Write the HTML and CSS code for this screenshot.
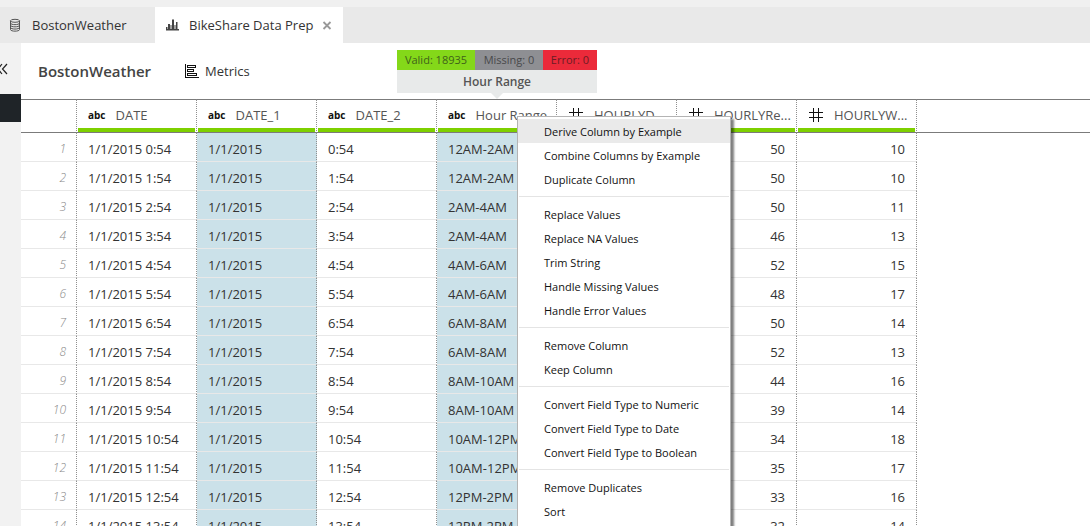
FILE: index.html
```html
<!DOCTYPE html>
<html lang="en">
<head>
<meta charset="utf-8">
<title>BikeShare Data Prep</title>
<link rel="stylesheet" href="styles.css">
</head>
<body>
<nav class="tabs">
  <button class="tab" type="button">
    <svg class="tab-icon" width="16" height="16" viewBox="0 0 16 16" fill="none" stroke="#555"><ellipse cx="8" cy="3.800" rx="4.500" ry="1.500"/><path d="M3.500 3.800v8.700c0 2.200 9 2.200 9 0V3.800M3.500 6c0 2.200 9 2.200 9 0M3.500 8.200c0 2.200 9 2.200 9 0M3.500 10.400c0 2.200 9 2.200 9 0"/></svg>
    <span>BostonWeather</span>
  </button>
  <div class="tab tab-active">
    <svg class="tab-icon" width="16" height="16" viewBox="0 0 16 16" fill="#444"><path d="M2 10h1.500v3H2zM4 7h2v6H4zM6.500 8h1v5h-1zM8 2.500h2V13H8zM10.500 8h1v5h-1zM12 5h1.500v8H12zM2 12h13v1.500H2z"/></svg>
    <span>BikeShare Data Prep</span>
    <button class="close" type="button" aria-label="Close tab"><svg width="10" height="10" viewBox="0 0 10 10" stroke="#999" stroke-width="1.800"><path d="M1.500 2l7 7M8.500 2l-7 7"/></svg></button>
  </div>
</nav>
<div class="workspace">
  <aside class="rail">
    <button class="expand" type="button" aria-label="Collapse panel"><svg width="8" height="12" viewBox="0 0 8 12" fill="none" stroke="#222" stroke-width="1.200"><path d="M2 1L-2 6l4 5M7 1L2.500 6 7 11"/></svg></button>
    <div class="rail-mark"></div>
  </aside>
  <main class="main">
    <header class="toolbar">
      <h1 class="title">BostonWeather</h1>
      <button class="metrics" type="button">
        <svg width="15" height="15" viewBox="0 0 15 15" fill="none" stroke="#111" shape-rendering="crispEdges"><path d="M.5 0v14M0 13.500h14" stroke-width="1"/><path d="M2.500 1.500h8v2h-8zM2.500 5.500h6v2h-6zM2.500 9.500h9v2h-9z"/></svg>
        <span>Metrics</span>
      </button>
    </header>
    <table class="grid">
      <colgroup><col class="c-num"><col class="c"><col class="c"><col class="c"><col class="c"><col class="c"><col class="c"><col class="c"><col></colgroup>
      <thead><tr id="head"></tr></thead>
      <tbody id="rows"></tbody>
    </table>
  </main>
</div>
<div class="tip">
  <div class="stats"><span class="valid">Valid: 18935</span><span class="missing">Missing: 0</span><span class="error">Error: 0</span></div>
  <div class="tip-name">Hour Range</div>
</div>
<div class="menu" role="menu">
  <button class="item item-on" role="menuitem">Derive Column by Example</button>
  <button class="item" role="menuitem">Combine Columns by Example</button>
  <button class="item" role="menuitem">Duplicate Column</button>
  <hr class="sep">
  <button class="item" role="menuitem">Replace Values</button>
  <button class="item" role="menuitem">Replace NA Values</button>
  <button class="item" role="menuitem">Trim String</button>
  <button class="item" role="menuitem">Handle Missing Values</button>
  <button class="item" role="menuitem">Handle Error Values</button>
  <hr class="sep">
  <button class="item" role="menuitem">Remove Column</button>
  <button class="item" role="menuitem">Keep Column</button>
  <hr class="sep">
  <button class="item" role="menuitem">Convert Field Type to Numeric</button>
  <button class="item" role="menuitem">Convert Field Type to Date</button>
  <button class="item" role="menuitem">Convert Field Type to Boolean</button>
  <hr class="sep">
  <button class="item" role="menuitem">Remove Duplicates</button>
  <button class="item" role="menuitem">Sort</button>
</div>
<script src="grid.js"></script>
</body>
</html>
```
FILE: styles.css
```css
* { box-sizing: border-box; }
body {
  margin: 0;
  height: 100vh;
  overflow: hidden;
  display: flex;
  flex-direction: column;
  position: relative;
  background: #fff;
  color: #333;
  font: 13px/18px "Open Sans", "Noto Sans", sans-serif;
}
button {
  margin: 0;
  padding: 0;
  border: 0;
  background: none;
  color: inherit;
  font: inherit;
}
.tabs {
  flex: none;
  display: flex;
  height: 43px;
  border-top: 7px solid #f0f0f0;
  background: #e9e9e9;
}
.tab {
  display: flex;
  align-items: center;
  gap: 9px;
  width: 155px;
  padding: 0 7px;
  white-space: nowrap;
}
.tab-active {
  width: 188px;
  padding: 0 9px;
  background: #fff;
}
.tab-icon { flex: none; }
.close { display: flex; }
.workspace {
  flex: 1;
  min-height: 0;
  display: flex;
}
.rail {
  flex: none;
  width: 21px;
  background: #f2f2f2;
}
.expand {
  display: flex;
  align-items: center;
  height: 51px;
}
.rail-mark {
  height: 28px;
  background: #1f2428;
}
.main {
  flex: 1;
  min-width: 0;
  overflow: hidden;
}
.toolbar {
  display: flex;
  align-items: center;
  gap: 34px;
  height: 56px;
  padding-left: 17px;
}
.title {
  margin: 0;
  color: #444;
  font-size: 15px;
  line-height: 22px;
  font-weight: 600;
}
.metrics {
  display: flex;
  align-items: center;
  gap: 5px;
}
.grid {
  width: 100%;
  table-layout: fixed;
  border-collapse: separate;
  border-spacing: 0;
}
.c-num { width: 56px; }
.c { width: 120px; }
.th {
  height: 34px;
  padding: 0 0 0 1px;
  border-top: 1px solid #7b7b7b;
  border-bottom: 1px solid #7b7b7b;
  font-weight: 400;
  text-align: left;
}
.th, .td { border-right: 1px dotted #8f8f8f; }
.th-rest, .td-rest { border-right: 0; }
.head {
  display: flex;
  align-items: center;
  gap: 10px;
  height: 32px;
  margin-right: 1px;
  padding: 2px 0 0 10px;
  border-bottom: 4px solid #7ed000;
  white-space: nowrap;
  color: #555;
}
.abc {
  color: #111;
  font-size: 10px;
  font-weight: 700;
}
.td {
  height: 29px;
  padding: 3px 11px 0;
  border-bottom: 1px solid #e8e8e8;
  white-space: nowrap;
}
.td-rest { border-bottom: 0; }
.num { text-align: right; }
.idx {
  padding-right: 10px;
  color: #888;
  font-size: 12px;
  font-style: italic;
  font-weight: 300;
  text-align: right;
}
.sel { background: #cbe1e9; }
.tip {
  position: absolute;
  left: 397px;
  top: 50px;
  width: 200px;
}
.tip::after {
  content: "";
  position: absolute;
  left: 94px;
  top: 43px;
  border: 6px solid transparent;
  border-top-color: #e8eaea;
  border-bottom: 0;
}
.stats {
  display: grid;
  grid-template-columns: 78px 68px 54px;
  font-size: 11px;
  line-height: 20px;
  text-align: center;
  white-space: nowrap;
}
.valid { background: #84d819; color: #3f621a; }
.missing { background: #8e8f93; color: #48494b; }
.error { background: #eb2a3a; color: #6b1c24; }
.tip-name {
  padding-top: 1px;
  background: #e8eaea;
  color: #555;
  font-size: 12px;
  font-weight: 600;
  line-height: 22px;
  text-align: center;
}
.menu {
  position: absolute;
  left: 517px;
  top: 116px;
  bottom: -8px;
  width: 214px;
  padding-top: 2px;
  border: 1px solid #b4b4b4;
  background: #fff;
  box-shadow: 3px 3px 2px rgba(0, 0, 0, 0.5);
  color: #111;
  font-size: 11px;
}
.item {
  display: block;
  width: 100%;
  height: 24px;
  padding: 1px 26px 0;
  text-align: left;
  white-space: nowrap;
}
.item-on { background: #eaeaea; }
.sep {
  margin: 5px 1px;
  border: 0;
  border-top: 1px solid #e4e4e4;
}
```
FILE: grid.js
```js
const columns = [
  ["abc", "DATE"], ["abc", "DATE_1"], ["abc", "DATE_2"], ["abc", "Hour Range"],
  ["num", "HOURLYD..."], ["num", "HOURLYRe..."], ["num", "HOURLYW..."]
];
const hash = '<svg width="16" height="16" viewBox="0 0 16 16" fill="none" stroke="#111" shape-rendering="crispEdges"><path d="M5.500 1v14M10.500 1v14M1 5.500h14M1 10.500h14"/></svg>';
document.getElementById("head").innerHTML = '<th class="th"></th>' + columns.map(([type, name]) =>
  `<th class="th"><div class="head">${type === "abc" ? '<span class="abc">abc</span>' : hash}<span>${name}</span></div></th>`
).join("") + '<th class="th th-rest"></th>';

const humidity = [50, 50, 50, 46, 52, 48, 50, 52, 44, 39, 34, 35, 33, 32];
const wind = [10, 10, 11, 13, 15, 17, 14, 13, 16, 14, 18, 17, 16, 14];
const label = h => `${h % 12 || 12}${h % 24 < 12 ? "AM" : "PM"}`;
document.getElementById("rows").innerHTML = humidity.map((value, h) => {
  const start = h - h % 2;
  return `<tr><td class="td idx">${h + 1}</td><td class="td">1/1/2015 ${h}:54</td><td class="td sel">1/1/2015</td><td class="td">${h}:54</td><td class="td sel">${label(start)}-${label(start + 2)}</td><td class="td num"></td><td class="td num">${value}</td><td class="td num">${wind[h]}</td><td class="td td-rest"></td></tr>`;
}).join("");
```
